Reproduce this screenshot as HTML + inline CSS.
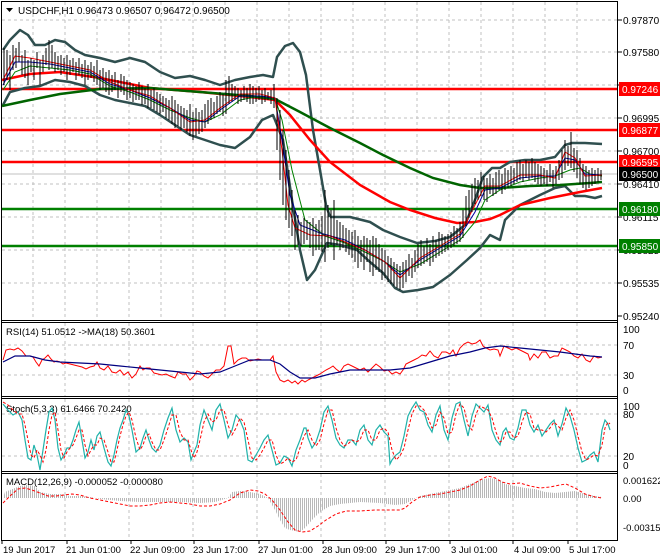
<!DOCTYPE html>
<html><head><meta charset="utf-8"><style>
html,body{margin:0;padding:0;background:#fff;}
svg{display:block;font-family:"Liberation Sans",sans-serif;}
</style></head><body>
<svg width="660" height="560" viewBox="0 0 660 560" xmlns="http://www.w3.org/2000/svg">
<defs>
<pattern id="hist" width="2" height="10" patternUnits="userSpaceOnUse"><rect x="0" y="0" width="1" height="10" fill="#b8b8b8"/></pattern>
</defs>
<rect width="660" height="560" fill="#fff"/>
<rect x="1.5" y="1.5" width="616" height="539" fill="none" stroke="#000"/>
<line x1="1" y1="320.5" x2="618" y2="320.5" stroke="#000"/>
<line x1="1" y1="322.5" x2="618" y2="322.5" stroke="#000"/>
<line x1="1" y1="396.5" x2="618" y2="396.5" stroke="#000"/>
<line x1="1" y1="398.5" x2="618" y2="398.5" stroke="#000"/>
<line x1="1" y1="471.5" x2="618" y2="471.5" stroke="#000"/>
<line x1="1" y1="473.5" x2="618" y2="473.5" stroke="#000"/>
<g stroke="#c0c0c0" stroke-dasharray="3,3">
<path d="M33 2V320M65 2V320M97 2V320M129 2V320M161 2V320M193 2V320M225 2V320M257 2V320M289 2V320M321 2V320M353 2V320M385 2V320M417 2V320M449 2V320M481 2V320M513 2V320M545 2V320M577 2V320"/>
<path d="M2 20H617M2 52H617M2 85H617M2 118H617M2 151H617M2 184H617M2 217H617M2 250H617M2 283H617"/>
<path d="M2 345H617M2 375H617M2 414H617M2 456H617"/>
<path d="M65 323V396M129 323V396M193 323V396M257 323V396M321 323V396M385 323V396M449 323V396M513 323V396M577 323V396"/>
<path d="M65 399V471M129 399V471M193 399V471M257 399V471M321 399V471M385 399V471M449 399V471M513 399V471M577 399V471"/>
<path d="M65 474V540M129 474V540M193 474V540M257 474V540M321 474V540M385 474V540M449 474V540M513 474V540M577 474V540"/>
</g>
<line x1="2" y1="174" x2="617" y2="174" stroke="#c0c0c0"/>
<g stroke-width="2.5">
<line x1="2" y1="89" x2="617" y2="89" stroke="#ff0000"/>
<line x1="2" y1="130" x2="617" y2="130" stroke="#ff0000"/>
<line x1="2" y1="162" x2="617" y2="162" stroke="#ff0000"/>
<line x1="2" y1="209" x2="617" y2="209" stroke="#008000"/>
<line x1="2" y1="246" x2="617" y2="246" stroke="#008000"/>
</g>
<g fill="none" stroke="#2f4f4f" stroke-width="2.5" stroke-linejoin="round">
<polyline points="3,50 10,40 20,30 28,35 35,45 45,45 55,40 65,42 75,50 85,55 100,58 115,62 130,58 145,62 160,72 175,78 190,76 205,80 220,85 235,80 250,77 263,75 273,77 277,57 285,46 293,43 300,52 306,75 313,130 320,170 326,205 330,217"/>
<polyline points="3,105 10,92 25,88 40,86 55,80 70,82 85,86 100,95 115,100 130,103 145,106 160,115 175,125 190,135 205,140 220,145 235,148 250,137 262,120 273,115 283,140 292,200 300,250 307,280 315,270 327,243 340,245 357,250 370,262 383,273 395,288 403,292 418,290 433,287 450,275 467,260 480,248 490,235 500,240 505,220 520,205 540,195 555,188 565,186 575,196 585,196 595,198 602,196"/>
<polyline points="330,217 350,217 370,222 383,230 400,237 417,243 435,241 450,237 465,225 475,200 483,177 492,168 500,168 510,162 525,160 540,160 555,157 565,145 572,143 585,143 602,144"/>
</g>
<polyline fill="none" stroke="#ff0000" stroke-width="2.5" points="2,80 30,74 60,72 100,78 150,88 200,92 250,97 275,100 290,115 310,140 330,162 360,185 390,202 410,210 435,218 457,223 475,222 490,219 500,215 520,205 550,198 580,192 602,188"/>
<polyline fill="none" stroke="#006400" stroke-width="2.5" points="2,106 30,100 60,94 100,89 150,88 200,92 250,96 275,99 300,112 330,128 360,143 383,155 410,168 433,178 460,185 480,188 500,188 530,186 560,185 590,183 602,182"/>
<polyline fill="none" stroke="#008000" stroke-width="1" points="3,90 15,72 30,66 50,68 70,70 90,74 110,86 130,92 150,100 170,110 190,118 205,122 220,115 240,100 260,96 275,98 282,120 292,170 305,220 325,236 345,243 365,252 385,262 400,272 420,264 440,252 460,240 475,222 485,200 500,190 520,182 540,178 555,176 570,170 580,168 590,174 602,176"/>
<polyline fill="none" stroke="#0000a0" stroke-width="1" points="3,85 15,62 30,62 50,64 70,68 90,72 110,84 130,90 150,98 170,108 190,120 205,122 220,110 240,96 260,96 275,98 282,140 290,195 300,225 320,233 345,240 365,250 385,262 400,275 420,260 440,248 460,236 475,212 485,190 500,188 520,178 540,176 555,176 565,158 575,160 585,174 602,175"/>
<polyline fill="none" stroke="#ff0000" stroke-width="1" points="3,80 15,56 30,58 50,62 70,66 90,70 110,82 130,90 150,96 170,108 190,122 205,120 220,108 240,94 260,94 275,98 282,150 288,205 295,228 310,235 330,236 345,242 365,250 385,262 400,278 420,258 440,246 460,234 475,205 485,186 500,186 520,175 540,175 555,178 565,152 575,158 585,176 602,175"/>
<g stroke="#000" stroke-width="1">
<path d="M4 48V85M7 50V80M10 55V90M13 45V70M16 48V68M19 42V62M22 55V75M25 50V78M28 60V85M31 58V72M34 60V80M37 52V68M40 60V85M43 55V72M46 48V65M49 40V70M52 45V68M55 52V72M58 56V70M61 55V75M64 58V72M67 55V80M70 60V75M73 58V72M76 62V80M79 58V75M82 64V78M85 60V85M88 65V80M91 62V78M94 66V82M97 60V85M100 70V90M103 68V88M106 72V92M109 70V95M112 75V92M115 72V90M118 80V98M121 74V92M124 76V95M127 80V100M130 82V98M133 84V102M136 86V100M139 82V100M142 86V105M145 88V104M148 84V108M151 90V108M154 88V110M157 92V112M160 94V114M163 96V112M166 98V118M169 100V120M172 96V124M175 100V128M178 104V126M181 106V130M184 108V128M187 110V132M190 104V136M193 112V140M196 108V136M199 112V134M202 110V132M205 104V128M208 100V124M211 98V120M214 102V118M217 96V114M220 92V112M223 94V116M226 80V114M229 76V104M232 84V102M235 86V100M238 88V104M241 90V102M244 86V100M247 88V102M250 84V104M253 86V104M256 88V102M259 86V100M262 90V104M265 88V102M268 92V100M271 90V104M274 84V108M277 98V150M280 110V180M283 130V205M286 150V220M289 170V228M292 190V236M295 210V250M298 215V245M301 222V246M304 218V244M307 220V240M310 222V248M313 218V256M316 224V250M319 220V250M322 216V252M325 190V262M328 205V248M331 210V245M334 200V260M337 220V245M340 222V250M343 225V248M346 228V252M349 230V255M352 232V258M355 230V262M358 236V268M361 240V262M364 236V270M367 238V262M370 240V272M373 236V276M376 238V270M379 244V272M382 248V280M385 250V278M388 256V282M391 258V284M394 262V286M397 264V288M400 266V290M403 262V288M406 260V282M409 254V276M412 258V278M415 250V272M418 244V268M421 240V266M424 246V264M427 238V262M430 244V266M433 236V262M436 240V258M439 232V256M442 234V254M445 236V252M448 234V250M451 232V248M454 226V246M457 228V244M460 222V242M463 210V238M466 196V226M469 190V218M472 184V212M475 178V204M478 180V200M481 172V196M484 176V200M487 178V202M490 174V194M493 178V196M496 172V194M499 170V190M502 174V194M505 168V190M508 170V188M511 166V186M514 168V184M517 162V182M520 160V180M523 164V182M526 160V178M529 162V180M532 158V178M535 162V182M538 164V184M541 166V186M544 168V184M547 170V186M550 164V182M553 170V188M556 166V184M559 160V180M562 150V178M565 140V170M568 146V166M571 132V168M574 148V172M577 150V178M580 158V184M583 164V188M586 166V190M589 170V188M592 168V186M595 170V184M598 168V182M601 170V180"/>
</g>
<g font-size="10" fill="#000">
<text x="623" y="24">0.97870</text>
<text x="623" y="56">0.97580</text>
<text x="623" y="89">0.97285</text>
<text x="623" y="122">0.96995</text>
<text x="623" y="155">0.96700</text>
<text x="623" y="188">0.96410</text>
<text x="623" y="221">0.96115</text>
<text x="623" y="254">0.95825</text>
<text x="623" y="287">0.95535</text>
<text x="623" y="320">0.95240</text>
</g>
<g stroke="#000"><path d="M618 20h4M618 52h4M618 85h4M618 118h4M618 151h4M618 184h4M618 217h4M618 250h4M618 283h4M618 316h4"/></g>
<g font-size="10">
<rect x="619" y="82" width="41" height="14" fill="#ff0000"/><text x="622" y="93" fill="#fff">0.97246</text>
<rect x="619" y="123" width="41" height="14" fill="#ff0000"/><text x="622" y="134" fill="#fff">0.96877</text>
<rect x="619" y="155" width="41" height="14" fill="#ff0000"/><text x="622" y="166" fill="#fff">0.96595</text>
<rect x="619" y="167" width="41" height="14" fill="#000"/><text x="622" y="178" fill="#fff">0.96500</text>
<rect x="619" y="202" width="41" height="14" fill="#008000"/><text x="622" y="213" fill="#fff">0.96180</text>
<rect x="619" y="239" width="41" height="14" fill="#008000"/><text x="622" y="250" fill="#fff">0.95850</text>
</g>
<path d="M6 8h7l-3.5 4z" fill="#000"/>
<text x="18" y="14" font-size="10" fill="#000">USDCHF,H1  0.96473 0.96507 0.96472 0.96500</text>
<text x="6" y="335" font-size="9.5">RSI(14) 51.0512  -&gt;MA(18) 50.3601</text>
<polyline fill="none" stroke="#ff0000" stroke-width="1" points="3,360 6,350 10,349 14,350 18,348 22,351 26,356 30,356 33,357 36,362 39,366 42,360 45,358 48,355 51,359 54,362 57,361 60,362 63,364 66,363 70,364 74,365 78,366 82,367 86,369 90,367 94,366 97,362 100,368 104,370 108,366 112,372 116,373 120,370 124,375 128,372 132,378 136,374 140,366 143,370 146,368 150,368 154,373 158,374 162,375 166,374 170,376 175,378 178,372 182,374 186,374 190,380 194,376 197,371 200,372 204,376 208,378 212,374 216,370 220,370 224,366 226,356 228,346 231,346 234,364 238,360 242,358 246,358 250,361 254,360 258,359 262,360 266,360 270,360 273,356 276,372 280,380 284,382 288,380 292,383 295,381 298,384 302,380 305,382 308,380 312,378 316,376 320,374 323,372 326,370 330,368 333,366 336,369 340,372 344,366 348,364 352,366 356,368 360,370 364,368 368,372 372,368 376,364 380,367 384,371 388,370 392,374 396,372 400,374 403,370 406,364 410,362 414,360 418,358 422,355 426,356 430,351 434,356 438,358 442,352 446,352 450,354 453,350 456,356 460,348 464,344 468,342 472,344 476,343 480,340 483,346 486,348 490,350 494,349 498,350 500,356 504,346 508,348 512,350 516,348 520,350 524,352 528,354 530,360 534,354 538,358 542,352 546,352 550,358 554,356 558,356 562,348 566,350 570,352 574,356 578,358 582,354 586,360 590,362 594,356 598,358 602,357"/>
<polyline fill="none" stroke="#000080" stroke-width="1.2" points="3,362 15,356 30,356 45,360 60,362 80,363 100,364 120,366 140,368 160,370 180,372 200,374 220,372 235,366 250,360 270,360 280,364 290,372 300,378 315,378 330,374 350,370 370,370 390,370 410,368 430,362 450,356 470,352 485,348 500,346 520,348 540,350 560,352 575,354 590,356 602,357"/>
<g font-size="10"><text x="623" y="333">100</text><text x="623" y="349">70</text><text x="623" y="379">30</text><text x="623" y="394">0</text></g>
<text x="6" y="412" font-size="9.5">Stoch(5,3,3) 61.6466 70.2420</text>
<polyline fill="none" stroke="#20b2aa" stroke-width="1.2" points="3,404 8,410 13,415 18,412 22,420 25,440 28,458 31,460 34,445 37,455 40,470 43,450 46,430 49,412 52,408 55,420 58,448 61,460 64,455 67,448 70,448 73,440 76,430 79,422 82,440 85,458 88,452 91,440 94,450 97,436 100,432 104,448 108,462 111,466 114,455 117,440 120,428 123,420 126,410 129,416 132,430 136,452 140,448 143,438 146,430 149,440 152,448 156,452 160,445 164,430 168,418 172,408 176,430 180,442 184,438 188,442 191,460 194,452 197,445 200,425 204,410 208,420 212,430 216,410 220,404 224,420 228,438 232,430 236,415 240,420 244,430 248,460 252,462 256,455 260,448 264,440 268,435 272,450 276,465 280,463 284,456 288,458 292,466 296,450 300,440 304,428 306,428 308,438 312,448 316,442 320,430 324,412 328,406 332,420 336,438 340,445 344,448 348,440 352,440 356,445 360,430 364,425 368,440 372,445 376,430 380,425 384,432 388,436 390,464 392,460 396,455 400,452 404,436 408,416 412,408 416,402 420,410 424,412 428,425 432,432 436,415 440,406 444,430 448,440 452,418 456,404 460,402 464,420 468,436 472,416 476,404 480,408 484,412 488,405 492,430 496,440 500,445 503,432 506,428 510,438 514,440 518,428 522,410 526,410 530,425 534,432 538,425 542,436 546,430 550,424 554,420 558,436 562,424 566,408 570,416 574,430 578,448 582,462 586,460 590,455 594,452 598,462 602,430 605,420 608,424 610,430"/>
<polyline fill="none" stroke="#ff0000" stroke-width="1" stroke-dasharray="3,2" points="3,402 8,405 13,410 18,414 22,414 25,425 28,440 31,455 34,458 37,450 40,455 43,462 46,450 49,430 52,415 55,412 58,430 61,450 64,458 67,452 70,448 73,445 76,438 79,430 82,430 85,445 88,456 91,450 94,445 97,445 100,438 104,440 108,452 111,462 114,462 117,450 120,436 123,425 126,416 129,412 132,420 136,438 140,450 143,445 146,436 149,434 152,442 156,450 160,450 164,440 168,428 172,415 176,415 180,432 184,440 188,440 191,450 194,458 197,452 200,440 204,422 208,414 212,422 216,420 220,410 224,410 228,425 232,435 236,428 240,418 244,422 248,440 252,458 256,460 260,455 264,448 268,440 272,440 276,455 280,464 284,462 288,458 292,462 296,460 300,448 304,436 308,430 312,440 316,446 320,440 324,424 328,410 332,410 336,428 340,440 344,446 348,444 352,440 356,442 360,440 364,430 368,430 372,440 376,440 380,430 384,428 388,432 392,450 396,460 400,456 404,448 408,430 412,414 416,406 420,406 424,410 428,418 432,428 436,425 440,412 444,418 448,434 452,432 456,414 460,404 464,408 468,425 472,430 476,414 480,406 484,408 488,410 492,418 496,432 500,442 503,440 506,432 510,432 514,438 518,436 522,422 526,412 530,414 534,428 538,430 542,430 546,432 550,428 554,422 558,426 562,430 566,418 570,410 574,420 578,436 582,452 586,460 590,458 594,455 598,456 602,445 605,428 608,422 610,424"/>
<g font-size="10"><text x="623" y="410">100</text><text x="623" y="418">80</text><text x="623" y="460">20</text><text x="623" y="469">0</text></g>
<polygon fill="url(#hist)" points="3,498 5,492 10,490 15,488 20,486 28,485 35,486 40,492 50,494 60,494 70,496 80,496 90,497 100,499 120,501 140,502 160,502 180,502 200,503 215,502 228,498 232,492 240,491 250,492 260,494 268,498 275,510 280,520 285,528 290,530 300,532 305,528 312,520 320,512 330,506 340,504 360,502 380,503 395,505 405,504 412,500 420,496 430,494 440,492 450,490 460,488 470,484 480,480 490,478 500,480 505,484 515,486 525,488 535,489 545,492 555,493 565,492 575,491 585,494 595,496 602,497 602,498 3,498"/>
<text x="6" y="485" font-size="9.5">MACD(12,26,9) -0.000052 -0.000080</text>
<polyline fill="none" stroke="#ff0000" stroke-width="1" stroke-dasharray="3,2" points="3,503 10,496 18,489 25,488 32,490 40,493 48,496 56,496 64,495 72,494 80,495 90,498 100,500 110,502 120,504 130,506 140,506 150,505 160,503 170,502 180,503 190,504 200,506 210,506 220,504 230,500 240,493 250,490 258,491 265,494 272,500 280,510 288,522 295,530 302,532 310,531 318,526 326,520 336,514 346,511 360,511 375,510 390,510 400,510 405,508 412,502 420,497 430,495 440,494 450,492 460,490 470,486 480,480 488,476 495,478 502,482 510,484 520,483 530,486 540,488 550,487 560,485 566,484 575,488 585,494 595,497 602,498"/>
<g font-size="9.5"><text x="623" y="484">0.001622</text><text x="623" y="502">0.00</text><text x="623" y="531">-0.003157</text></g>
<g stroke="#000"><path d="M2 540v4M67 540v4M131 540v4M194 540v4M259 540v4M323 540v4M386 540v4M450 540v4M513 540v4M568 540v4"/></g>
<g font-size="9.5" fill="#000">
<text x="3" y="553">19 Jun 2017</text>
<text x="66" y="553">21 Jun 01:00</text>
<text x="130" y="553">22 Jun 09:00</text>
<text x="193" y="553">23 Jun 17:00</text>
<text x="258" y="553">27 Jun 01:00</text>
<text x="322" y="553">28 Jun 09:00</text>
<text x="385" y="553">29 Jun 17:00</text>
<text x="451" y="553">3 Jul 01:00</text>
<text x="514" y="553">4 Jul 09:00</text>
<text x="569" y="553">5 Jul 17:00</text>
</g>
</svg>
</body></html>
